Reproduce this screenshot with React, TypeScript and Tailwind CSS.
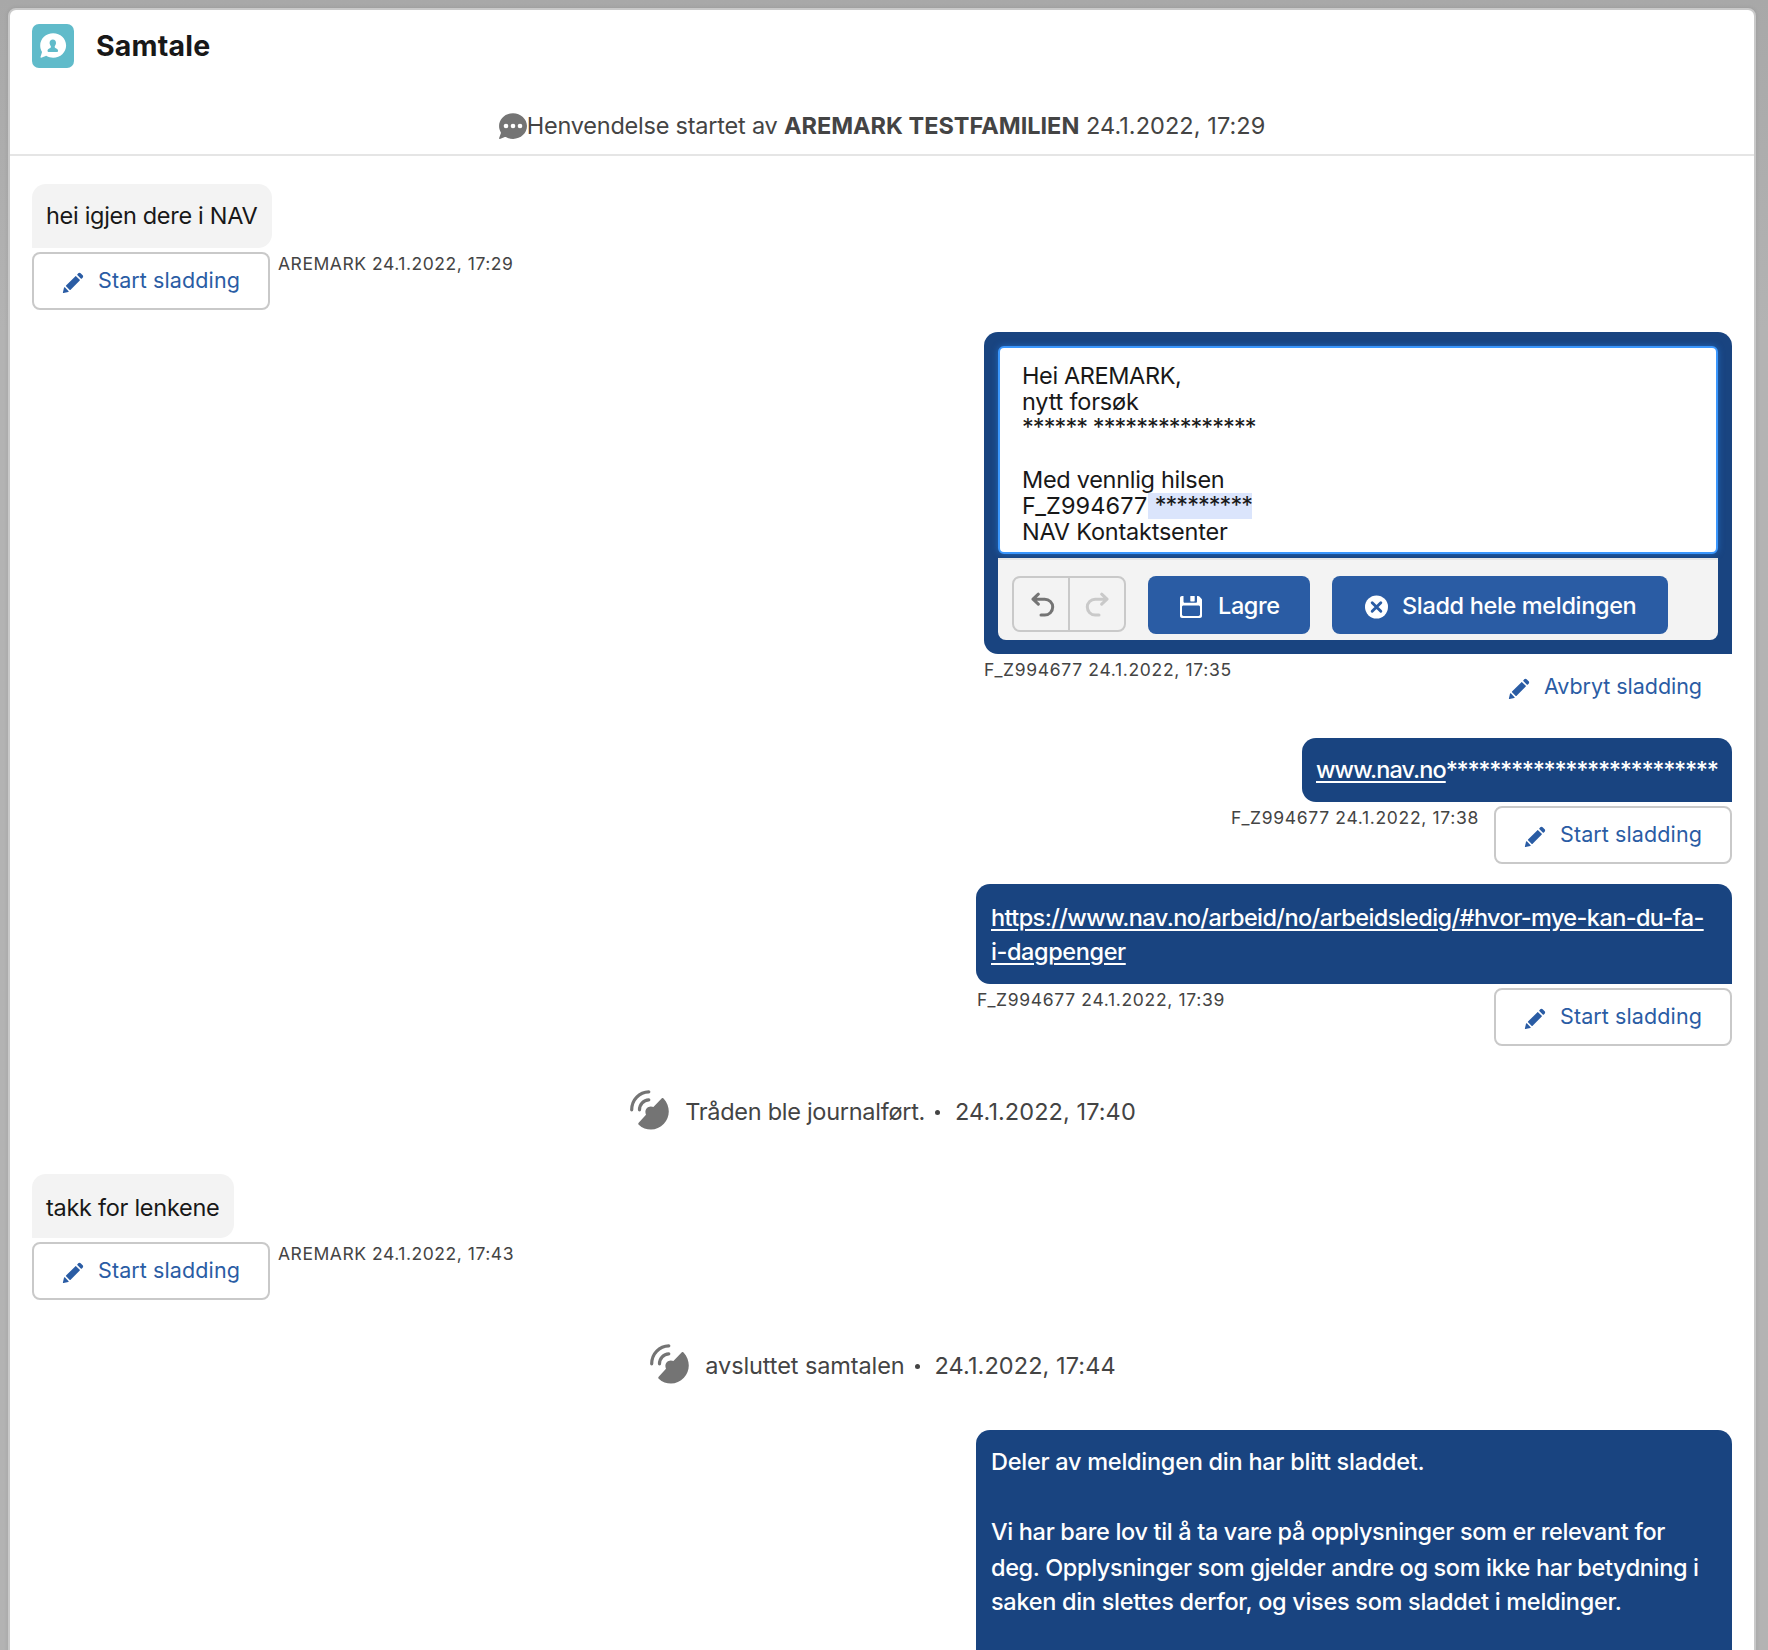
import React from "react";

function PencilIcon() {
  return (
    <svg viewBox="0 0 52 52" className="mt-1 h-[22px] w-[22px] shrink-0 fill-[#2a5ca4]">
      <path d="M9.5 33.4l8.9 8.9c.4.4 1 .4 1.4 0L42 20c.4-.4.4-1 0-1.4l-8.8-8.8c-.4-.4-1-.4-1.4 0L9.500 32.100c-.4.4-.4 1 0 1.300zM36.100 5.700c-.4.4-.4 1 0 1.400l8.800 8.800c.4.4 1 .4 1.400 0l2.500-2.500c1.600-1.500 1.600-3.900 0-5.500l-4.700-4.700c-1.600-1.600-4.100-1.600-5.700 0l-2.300 2.500zM2.100 48.200c-.2 1 .7 1.900 1.700 1.700l10.900-2.600c.4-.1.7-.3.9-.5l.2-.2c.2-.2.3-.9-.1-1.300l-9-9c-.4-.4-1.100-.3-1.300-.1l-.2.2c-.3.3-.4.6-.5.9L2.100 48.200z" />
    </svg>
  );
}

function ConversationIcon() {
  return (
    <svg viewBox="0 0 42 44" className="h-11 w-[42px] shrink-0">
      <rect width="42" height="44" rx="7" fill="#60bbca" />
      <path
        d="M21.2 9.3c7.2 0 12.9 5.4 12.9 12.2S28.4 33.700 21.200 33.700c-2.400 0-4.700-.6-6.600-1.700-.3-.2-.6-.2-.9-.1l-4.500 1.900c-.4.2-.8-.2-.7-.7l1.400-4.700c.1-.3.1-.6-.1-.9-1-1.700-1.600-3.800-1.600-6C8.200 14.700 14 9.300 21.200 9.300z"
        fill="#fff"
      />
      <path
        d="M20.800 15.600c2 0 3.200 1.500 3.200 3.500 0 1.500-1 2.400-1.300 3.400-.2.9.3 1.400 1.200 1.700 1.200.5 2.200 1.200 2.200 2.500 0 .9-.6 1.400-1.400 1.400h-7.800c-.8 0-1.400-.5-1.400-1.400 0-1.300 1-2 2.200-2.500.9-.3 1.400-.8 1.200-1.700-.3-1-1.300-1.900-1.300-3.400 0-2 1.200-3.500 3.200-3.500z"
        fill="#60bbca"
      />
    </svg>
  );
}

function ChatIcon() {
  return (
    <svg viewBox="2 4 48 44" className="-mt-px h-[26px] w-7 shrink-0">
      <path
        fill="#747474"
        d="M26 4C12.700 4 2.100 13.800 2.100 26c0 3.800 1.100 7.400 2.900 10.600.3.500.4 1.100.2 1.700l-3.100 8.500c-.3.8.5 1.500 1.300 1.300l8.600-3.300c.5-.2 1.100-.1 1.700.2 3.600 2 7.900 3.200 12.500 3.200C39.300 48 50 38.300 50 26.100 49.900 13.800 39.200 4 26 4z"
      />
      <circle cx="14" cy="26" r="4" fill="#fff" />
      <circle cx="26" cy="26" r="4" fill="#fff" />
      <circle cx="38" cy="26" r="4" fill="#fff" />
    </svg>
  );
}

function BroadcastIcon() {
  return (
    <svg viewBox="0 0 40 41" className="h-[41px] w-10 shrink-0">
      <g fill="none" stroke="#747474" strokeWidth="3.2" strokeLinecap="round">
        <path d="M1.700 19.800C1.700 9.500 9.500 2 18.800 1.800" />
        <path d="M9.500 19.800c0-5.500 4.100-9.800 9.300-10" />
      </g>
      <path
        fill="#747474"
        d="M31.600 8.500c.6-.6 1.400-.6 2 .1 7 7.900 6.700 18.400.3 25.200-6.700 7.300-17.700 7.800-25.200.9-.6-.6-.6-1.300 0-1.900l7.300-8.100c-1.700-3.500.3-8.300 4.800-8.300.9 0 1.900.3 2.600.7z"
      />
    </svg>
  );
}

function UndoIcon({ redo = false }: { redo?: boolean }) {
  return (
    <svg
      viewBox="0 0 24 26"
      className={redo ? "mt-0.5 h-[26px] w-6 -scale-x-100 stroke-[#c9c9c9]" : "mt-0.5 ml-1 h-[26px] w-6 stroke-[#747474]"}
      fill="none"
      strokeWidth="3"
      strokeLinecap="round"
      strokeLinejoin="round"
    >
      <path d="M7.300 2.200L2 7.200l5.300 5M2.500 7.200h11.300a7.900 7.900 0 0 1 0 15.800H10" />
    </svg>
  );
}

function SaveIcon() {
  return (
    <svg viewBox="0 0 22 22" className="mt-1 h-[22px] w-[22px] shrink-0">
      <path
        fill="#fff"
        fillRule="evenodd"
        d="M2 0h1.500v5.500c0 .8.500 1.300 1.300 1.300h10.900c.8 0 1.300-.5 1.300-1.300V0h1.200c.5 0 .9.200 1.200.5l2.100 2.200c.3.300.5.700.5 1.100V20c0 1.100-.9 2-2 2H2c-1.100 0-2-.9-2-2V2C0 .9.900 0 2 0zM3.500 9.500c-.8 0-1.500.6-1.500 1.400v7.700c0 .8.700 1.400 1.500 1.400h15c.8 0 1.500-.6 1.500-1.400v-7.700c0-.8-.7-1.400-1.500-1.400z"
      />
      <rect x="10.300" width="4.400" height="5.400" rx=".6" fill="#fff" />
    </svg>
  );
}

function ClearIcon() {
  return (
    <svg viewBox="0 0 24 24" className="mt-1 h-6 w-[23px] shrink-0">
      <circle cx="12" cy="12" r="12" fill="#fff" />
      <path d="M7.500 7.500l9 9m0-9l-9 9" stroke="#2a5ca4" strokeWidth="3" strokeLinecap="round" />
    </svg>
  );
}

function RedactButton() {
  return (
    <button className="flex h-[58px] w-[238px] shrink-0 items-center rounded-lg border-2 border-[#c9c9c9] bg-white pl-[28px] text-[21.5px] text-[#2a5ca4]">
      <PencilIcon />
      <span className="-mt-0.5 ml-[14px] whitespace-nowrap tracking-[0.1px]">Start sladding</span>
    </button>
  );
}

function Meta({ children, className }: { children: React.ReactNode; className: string }) {
  return <p className={`text-[17.5px] leading-6 whitespace-nowrap text-[#444] ${className}`}>{children}</p>;
}

function Incoming({ text, meta, bubble }: { text: string; meta: string; bubble: string }) {
  return (
    <div className="flex flex-col items-start">
      <p className={`h-16 rounded-[14px] rounded-bl-none bg-[#f3f3f3] px-[14px] leading-9 whitespace-nowrap ${bubble}`}>
        {text}
      </p>
      <div className="mt-1 flex">
        <RedactButton />
        <Meta className="ml-2 tracking-[0.54px]">{meta}</Meta>
      </div>
    </div>
  );
}

function Event({ text, date, className }: { text: string; date: string; className: string }) {
  return (
    <div className={`flex items-center justify-center text-[#444] ${className}`}>
      <BroadcastIcon />
      <span className="mt-1 ml-[15px] whitespace-nowrap">{text}</span>
      <span className="mt-1 mr-[15px] ml-[10px] h-[5px] w-[5px] rounded-full bg-[#444]" />
      <span className="mt-1 tracking-[0.08px] whitespace-nowrap">{date}</span>
    </div>
  );
}

function Editor() {
  return (
    <div className="h-[322px] w-[748px] rounded-[14px] rounded-br-none bg-[#194480] p-[14px]">
      <div className="h-52 rounded-md border-2 border-[#3b97fd] bg-white pt-[15px] pl-[22px] leading-[26px] shadow-[0_0_6px_#2166b8]">
        <p className="tracking-[-0.38px]">Hei AREMARK,</p>
        <p className="tracking-[-0.2px]">nytt forsøk</p>
        <p className="mb-0.5 leading-6 tracking-[-0.92px]">****** ***************</p>
        <p className="h-[26px]" />
        <p className="tracking-[-0.3px]">Med vennlig hilsen</p>
        <p className="flex">
          <span className="w-[126px] tracking-[0.1px]">F_Z994677</span>
          <span className="h-[26px] bg-[#dbe5fc] pl-px leading-6 tracking-[-0.95px] whitespace-pre"> *********</span>
        </p>
        <p className="tracking-[-0.22px]">NAV Kontaktsenter</p>
      </div>
      <div className="mt-1 flex h-[82px] rounded-b-lg border-t-2 border-[#e5e5e5] bg-[#f3f3f3] pt-4 pl-[14px]">
        <div className="flex h-14 w-[114px] rounded-lg border-2 border-[#c9c9c9]">
          <button className="flex flex-1 items-center justify-center border-r-2 border-[#c9c9c9]">
            <UndoIcon />
          </button>
          <button className="flex flex-1 items-center justify-center">
            <UndoIcon redo />
          </button>
        </div>
        <button className="ml-[22px] flex h-[58px] w-[162px] items-center rounded-lg bg-[#2a5ca4] pl-8 font-[450] text-white">
          <SaveIcon />
          <span className="mt-0.5 ml-4 tracking-[-0.4px]">Lagre</span>
        </button>
        <button className="ml-[22px] flex h-[58px] w-[336px] items-center rounded-lg bg-[#2a5ca4] pl-[33px] font-[450] text-white">
          <ClearIcon />
          <span className="mt-0.5 ml-[14px] tracking-[-0.35px]">Sladd hele meldingen</span>
        </button>
      </div>
    </div>
  );
}

export default function App() {
  return (
    <div className="h-[1650px] overflow-hidden bg-linear-to-b from-[#a8a8a8] to-[#b3b3b3] to-20% px-2 pt-2 pr-3 font-['Inter',sans-serif] text-[23.5px] font-[420] tracking-[-0.28px] text-[#181818]">
      <div className="h-[1700px] rounded-lg border-2 border-[#c9c9c9] bg-white shadow-[0_0_4px_rgba(0,0,0,0.1)]">
        <header className="h-[146px] border-b-2 border-[#e5e5e5]">
          <div className="flex items-center pt-[14px] pl-[22px]">
            <ConversationIcon />
            <h1 className="ml-[22px] text-[28.5px] leading-9 font-bold tracking-[0.2px]">Samtale</h1>
          </div>
          <div className="mt-[42px] flex items-center justify-center leading-8 whitespace-pre text-[#444]">
            <ChatIcon />
            <span className="tracking-[-0.22px]">Henvendelse startet av </span>
            <b className="tracking-[0px]">AREMARK TESTFAMILIEN</b>
            <span className="tracking-[0.06px]"> 24.1.2022, 17:29</span>
          </div>
        </header>
        <main className="flex flex-col px-[22px] pt-7">
          <Incoming
            text="hei igjen dere i NAV"
            meta="AREMARK 24.1.2022, 17:29"
            bubble="w-60 pt-[14px] tracking-[-0.31px]"
          />

          <div className="mt-[22px] self-end">
            <Editor />
            <div className="mt-1 flex h-[58px] justify-between">
              <Meta className="tracking-[0.67px]">F_Z994677 24.1.2022, 17:35</Meta>
              <button className="flex items-center pr-[30px] text-[21.5px] text-[#2a5ca4]">
                <PencilIcon />
                <span className="-mt-0.5 ml-[14px] tracking-[-0.04px]">Avbryt sladding</span>
              </button>
            </div>
          </div>

          <div className="mt-[22px] flex flex-col items-end">
            <p className="h-16 w-[430px] rounded-[14px] rounded-br-none bg-[#194480] px-[14px] pt-[14px] leading-9 font-[450] whitespace-nowrap text-white">
              <a className="tracking-[-0.92px] underline decoration-2 underline-offset-3">www.nav.no</a>
              <span className="tracking-[-1.36px]">*************************</span>
            </p>
            <div className="mt-1 flex">
              <Meta className="mr-[15px] tracking-[0.67px]">F_Z994677 24.1.2022, 17:38</Meta>
              <RedactButton />
            </div>
          </div>

          <div className="mt-5 w-[756px] self-end">
            <p className="h-[100px] rounded-[14px] rounded-br-none bg-[#194480] px-[15px] pt-[17px] leading-[34px] font-[450] tracking-[-0.6px] whitespace-nowrap text-white">
              <a className="underline decoration-2 underline-offset-3">
                https://www.nav.no/arbeid/no/arbeidsledig/#hvor-mye-kan-du-fa-
                <br />
                <span className="tracking-[-0.4px]">i-dagpenger</span>
              </a>
            </p>
            <div className="mt-1 flex justify-between">
              <Meta className="ml-px tracking-[0.67px]">F_Z994677 24.1.2022, 17:39</Meta>
              <RedactButton />
            </div>
          </div>

          <Event text="Tråden ble journalført." date="24.1.2022, 17:40" className="h-32 pl-0.5" />

          <Incoming
            text="takk for lenkene"
            meta="AREMARK 24.1.2022, 17:43"
            bubble="w-[202px] pt-4 tracking-[-0.28px]"
          />

          <Event text="avsluttet samtalen" date="24.1.2022, 17:44" className="mb-0.5 h-32 pl-0.5 tracking-[-0.1px]" />

          <div className="h-[300px] w-[756px] self-end rounded-t-[14px] bg-[#194480] px-[15px] pt-[14px] leading-[35px] font-[450] whitespace-nowrap text-white">
            <p className="tracking-[-0.26px]">Deler av meldingen din har blitt sladdet.</p>
            <p className="mt-[35px] tracking-[-0.34px]">Vi har bare lov til å ta vare på opplysninger som er relevant for</p>
            <p className="mt-px -mb-px tracking-[-0.37px]">
              deg. Opplysninger som gjelder andre og som ikke har betydning i
            </p>
            <p className="tracking-[-0.3px]">saken din slettes derfor, og vises som sladdet i meldinger.</p>
          </div>
        </main>
      </div>
    </div>
  );
}
